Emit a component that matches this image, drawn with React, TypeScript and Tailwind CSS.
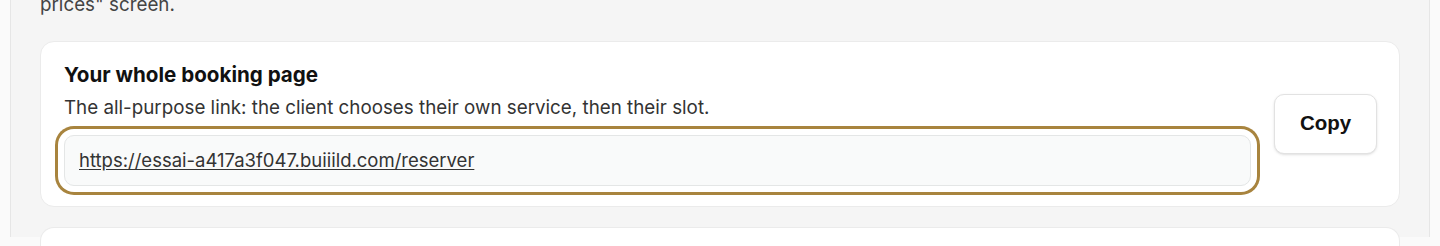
export default function App() {
  return (
    <div className="h-[246px] bg-[#fafafa] pl-[10px] pr-[10px] overflow-hidden font-['Inter',sans-serif]">
      <div className="h-full border-x border-[#e6e6e6] bg-[#f5f5f5] px-[29px]">
        {/* Tail of the previous paragraph */}
        <p className="-mt-[9px] text-[18.8px] leading-7 text-[#444]">prices" screen.</p>

        {/* Booking link card */}
        <div className="mt-[22px] flex items-center gap-[23px] rounded-[14px] border border-[#ebebeb] bg-white pl-[23px] pr-[22px] pt-[19px] pb-[20px]">
          <div className="flex-1">
            <h3 className="text-[20.6px] font-bold leading-7 text-[#111]">Your whole booking page</h3>
            <p className="mt-[5px] text-[18.8px] leading-7 text-[#333]">
              The all-purpose link: the client chooses their own service, then their slot.
            </p>
            <div className="mt-[13px] rounded-[10px] bg-[#f9fafa] ring-[3px] ring-[#a8843e] ring-offset-[6px] ring-offset-white">
              <div className="flex h-[51px] items-center rounded-[10px] border border-[#e4e6e6] px-[14px]">
                <a href="#" className="text-[18.5px] text-[#333] underline underline-offset-2">
                  https://essai-a417a3f047.buiiild.com/reserver
                </a>
              </div>
            </div>
          </div>
          <button className="h-[60px] w-[103px] rounded-[10px] border border-[#e2e2e2] bg-white font-['Liberation_Sans',Arial,sans-serif] text-[20.5px] font-bold text-[#111] shadow-sm">
            Copy
          </button>
        </div>

        {/* Next card */}
        <div className="mt-[20px] h-[20px] rounded-t-[14px] border border-b-0 border-[#ebebeb] bg-white"></div>
      </div>
    </div>
  );
}
